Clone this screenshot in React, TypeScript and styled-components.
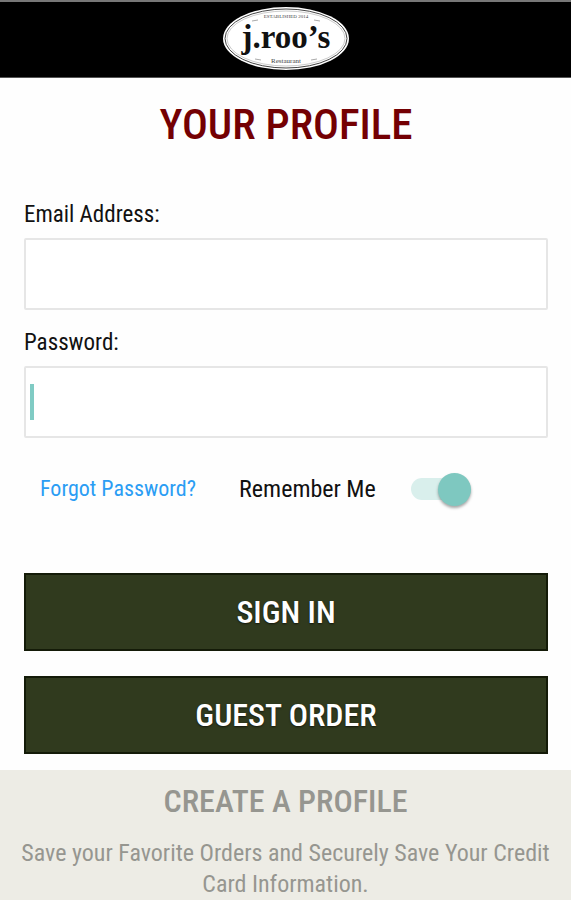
import React, { useState } from "react";
import styled, { createGlobalStyle } from "styled-components";

const GlobalStyle = createGlobalStyle`
  *, *::before, *::after { box-sizing: border-box; }
  body {
    margin: 0;
    background: #fefefe;
    color: #111;
    font-family: "Roboto Condensed", "Liberation Sans Narrow", Roboto, sans-serif;
  }
`;

const Page = styled.div`
  display: flex;
  flex-direction: column;
  min-height: 100vh;
`;

const Header = styled.header`
  display: flex;
  justify-content: center;
  padding: 5px 0 7px;
  background: #000;
  border-top: 2px solid #777;
  border-bottom: 1px solid #555;
`;

const Logo = styled.svg`
  display: block;
  width: 126px;
  height: 63px;
`;

const Main = styled.main`
  display: flex;
  flex-direction: column;
  padding: 22px 23px 16px 24px;
`;

const Title = styled.h1`
  margin: 0 0 52px;
  color: #740003;
  font-size: 43px;
  font-weight: 500;
  line-height: 48px;
  text-align: center;
`;

const Form = styled.form`
  display: flex;
  flex-direction: column;
`;

const Field = styled.div`
  display: flex;
  flex-direction: column;
  gap: 8px;
  margin-bottom: 18px;
`;

const Label = styled.label`
  font-size: 23px;
  line-height: 30px;
`;

const InputFrame = styled.div`
  position: relative;
  display: flex;
`;

const Input = styled.input`
  flex: 1;
  min-width: 0;
  height: 72px;
  padding: 0 8px;
  border: 2px solid #e6e6e6;
  border-radius: 2px;
  background: #fff;
  font: inherit;
  font-size: 23px;
  outline: none;
  caret-color: transparent;
`;

const Caret = styled.span`
  position: absolute;
  left: 6px;
  top: 18px;
  width: 4px;
  height: 36px;
  background: #80cbc4;
`;

const Options = styled.div`
  display: flex;
  align-items: center;
  margin: 16px 16px 67px;
  line-height: 34px;
`;

const ForgotLink = styled.a`
  margin-right: 43px;
  color: #2b9df4;
  font-size: 22px;
  text-decoration: none;
`;

const RememberLabel = styled.label`
  display: flex;
  align-items: center;
  gap: 35px;
  font-size: 24px;
`;

const Switch = styled.input`
  appearance: none;
  display: flex;
  align-items: center;
  width: 60px;
  height: 22px;
  margin: 0;
  border-radius: 11px;
  background: #d9efec;

  &::before {
    content: "";
    width: 33px;
    height: 33px;
    border-radius: 50%;
    background: #7ec8c0;
    box-shadow: 0 2px 3px rgba(0, 0, 0, 0.35);
  }

  &:checked {
    justify-content: flex-end;
  }
`;

const Actions = styled.div`
  display: flex;
  flex-direction: column;
  gap: 25px;
`;

const ActionButton = styled.button`
  height: 78px;
  border: 2px solid #141b08;
  background: #303a1e;
  color: #fff;
  font-family: inherit;
  font-size: 32px;
  font-weight: 500;
  line-height: 40px;
  text-shadow: 0 1px 2px rgba(0, 0, 0, 0.6);
`;

const Promo = styled.section`
  flex: 1;
  padding: 14px 16px 0;
  background: #edece5;
  color: #969690;
  text-align: center;
`;

const PromoTitle = styled.h2`
  margin: 0 0 20px;
  font-size: 32px;
  font-weight: 500;
  line-height: 34px;
`;

const PromoText = styled.p`
  margin: 0;
  font-size: 24px;
  line-height: 31px;
`;

function BrandLogo() {
  return (
    <Logo viewBox="0 0 126 63" role="img" aria-label="j.roo's restaurant">
      <ellipse cx="63" cy="31.5" rx="63" ry="31.5" fill="#fff" />
      <ellipse cx="63" cy="31.5" rx="61" ry="29.5" fill="none" stroke="#444" strokeWidth="1" />
      <ellipse cx="63" cy="31.5" rx="59" ry="27.5" fill="none" stroke="#aaa" strokeWidth="0.6" />
      <path d="M29 14l6-1M91 13l6 1M38 53l-6-1M88 53l6-1" stroke="#aaa" strokeWidth="1" />
      <g textAnchor="middle" fontFamily="'Liberation Serif', serif" fill="#111">
        <text x="63" y="11" fontSize="5" fill="#444">ESTABLISHED 2014</text>
        <text x="63" y="41" fontSize="33" fontWeight="700">j.roo’s</text>
        <text x="63" y="56" fontSize="7" fill="#444">Restaurant</text>
      </g>
    </Logo>
  );
}

export default function App() {
  const [remember, setRemember] = useState(true);
  return (
    <>
      <GlobalStyle />
      <Page>
        <Header>
          <BrandLogo />
        </Header>
        <Main>
          <Title>YOUR PROFILE</Title>
          <Form onSubmit={(event) => event.preventDefault()}>
            <Field>
              <Label htmlFor="email">Email Address:</Label>
              <InputFrame>
                <Input id="email" type="email" />
              </InputFrame>
            </Field>
            <Field>
              <Label htmlFor="password">Password:</Label>
              <InputFrame>
                <Input id="password" type="password" />
                <Caret />
              </InputFrame>
            </Field>
            <Options>
              <ForgotLink href="#forgot">Forgot Password?</ForgotLink>
              <RememberLabel>
                Remember Me
                <Switch
                  type="checkbox"
                  checked={remember}
                  onChange={(event) => setRemember(event.target.checked)}
                />
              </RememberLabel>
            </Options>
            <Actions>
              <ActionButton type="submit">SIGN IN</ActionButton>
              <ActionButton type="button">GUEST ORDER</ActionButton>
            </Actions>
          </Form>
        </Main>
        <Promo>
          <PromoTitle>CREATE A PROFILE</PromoTitle>
          <PromoText>Save your Favorite Orders and Securely Save Your Credit Card Information.</PromoText>
        </Promo>
      </Page>
    </>
  );
}
